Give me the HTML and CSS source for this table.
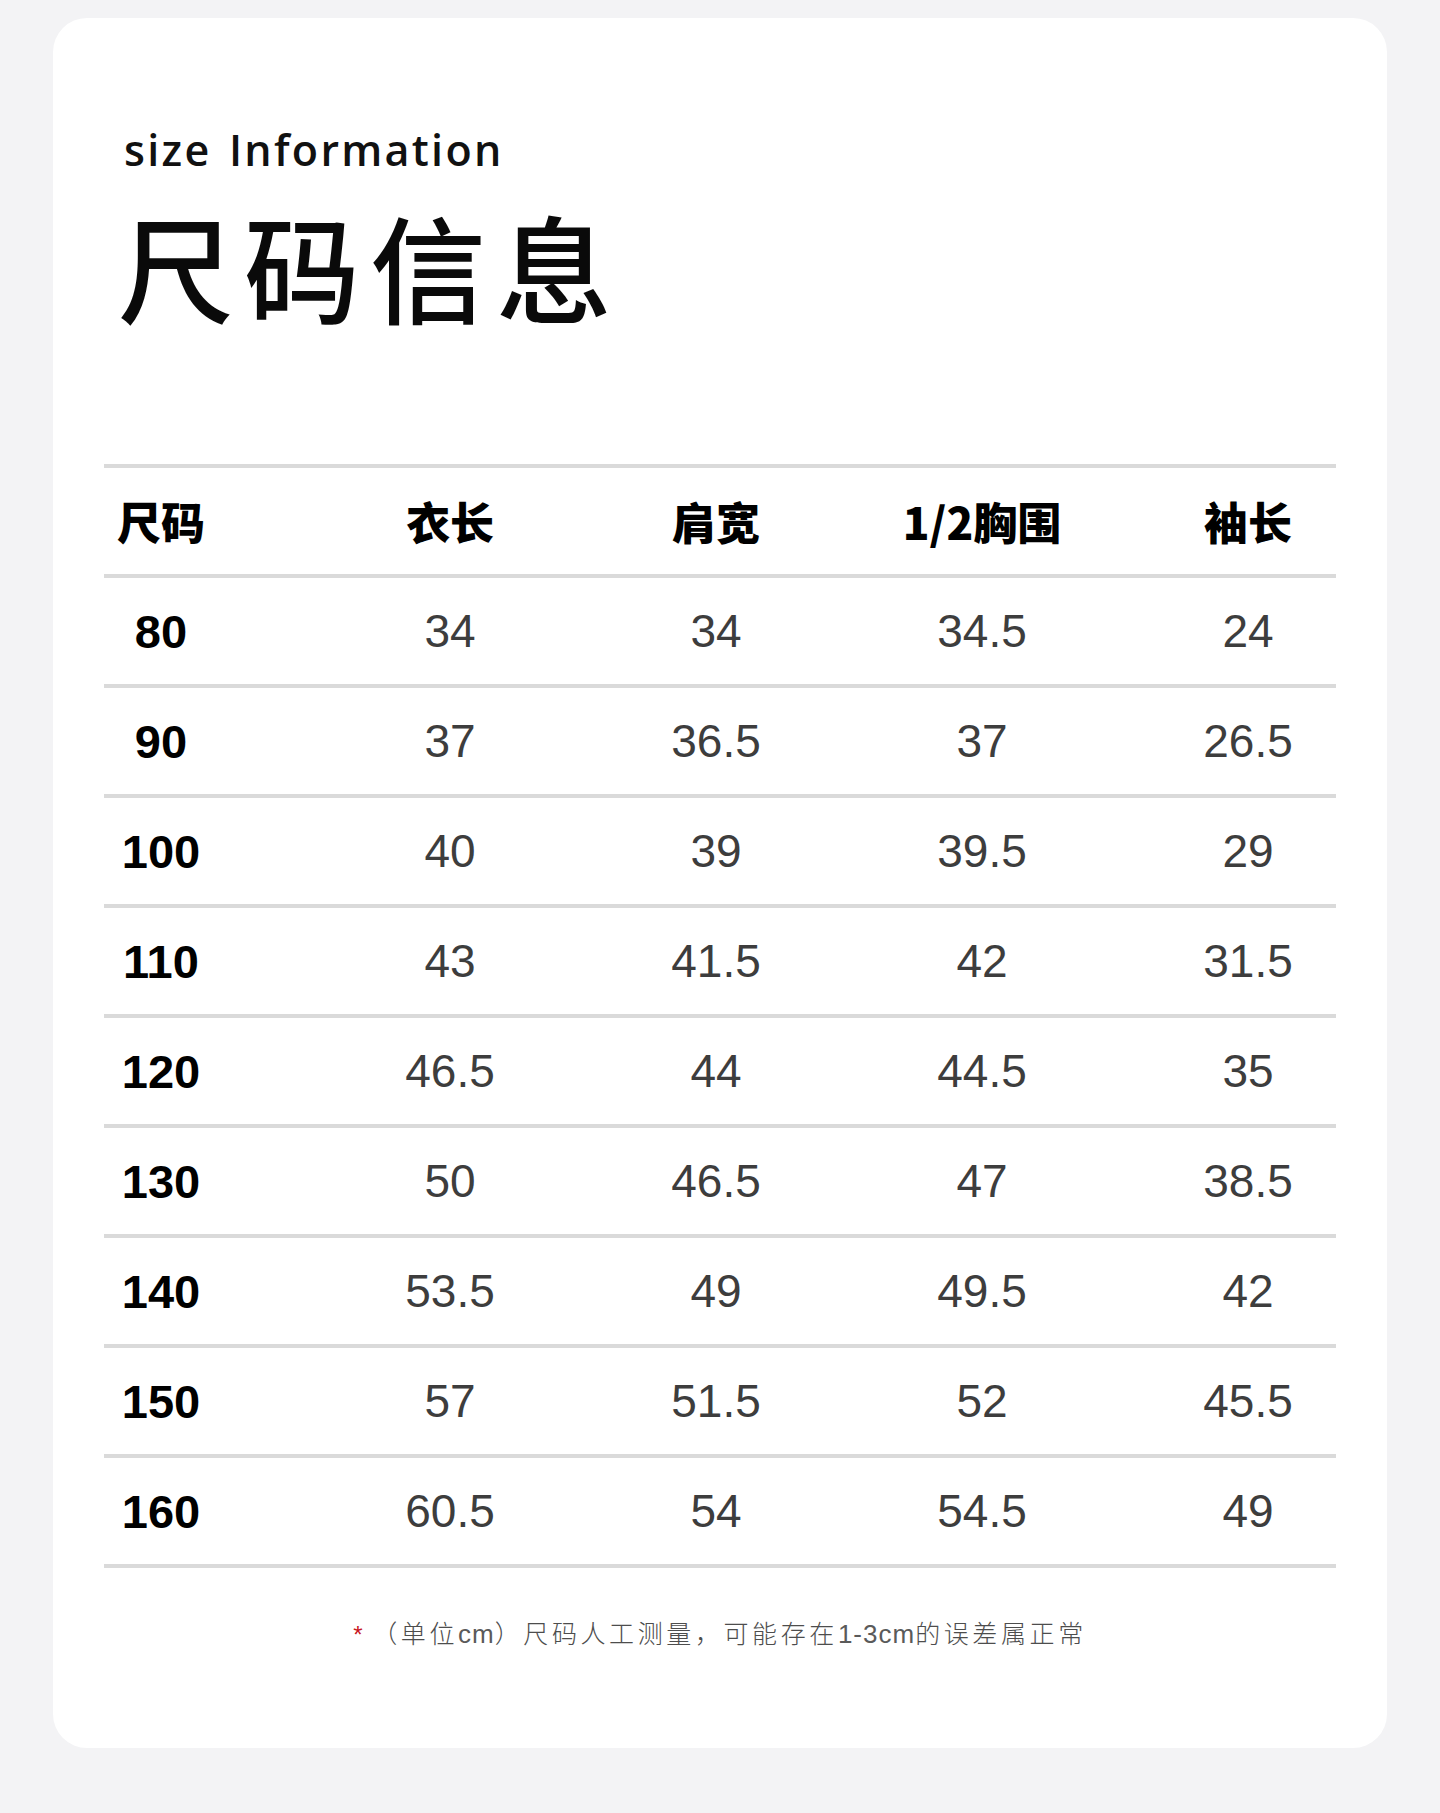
FILE: index.html
```html
<!DOCTYPE html>
<html lang="zh-CN">
<head>
<meta charset="utf-8">
<title>尺码信息</title>
<link rel="stylesheet" href="styles.css">
</head>
<body>
<div class="card">
  <div class="eyebrow">size Information</div>
  <h1 class="title">尺码信息</h1>
  <div class="table">
    <div class="row head">
      <div class="c first">尺码</div>
      <div class="c">衣长</div>
      <div class="c">肩宽</div>
      <div class="c">1/2胸围</div>
      <div class="c">袖长</div>
    </div>
    <div class="row"><div class="c first">80</div><div class="c">34</div><div class="c">34</div><div class="c">34.5</div><div class="c">24</div></div>
    <div class="row"><div class="c first">90</div><div class="c">37</div><div class="c">36.5</div><div class="c">37</div><div class="c">26.5</div></div>
    <div class="row"><div class="c first">100</div><div class="c">40</div><div class="c">39</div><div class="c">39.5</div><div class="c">29</div></div>
    <div class="row"><div class="c first">110</div><div class="c">43</div><div class="c">41.5</div><div class="c">42</div><div class="c">31.5</div></div>
    <div class="row"><div class="c first">120</div><div class="c">46.5</div><div class="c">44</div><div class="c">44.5</div><div class="c">35</div></div>
    <div class="row"><div class="c first">130</div><div class="c">50</div><div class="c">46.5</div><div class="c">47</div><div class="c">38.5</div></div>
    <div class="row"><div class="c first">140</div><div class="c">53.5</div><div class="c">49</div><div class="c">49.5</div><div class="c">42</div></div>
    <div class="row"><div class="c first">150</div><div class="c">57</div><div class="c">51.5</div><div class="c">52</div><div class="c">45.5</div></div>
    <div class="row"><div class="c first">160</div><div class="c">60.5</div><div class="c">54</div><div class="c">54.5</div><div class="c">49</div></div>
  </div>
  <p class="note"><span class="star">*</span>（单位<span class="lat">cm</span>）尺码人工测量，可能存在<span class="lat">1-3cm</span>的误差属正常</p>
</div>
</body>
</html>
```
FILE: styles.css
```css
* { box-sizing: border-box; }
html, body { margin: 0; padding: 0; }
body {
  background: #f3f3f5;
  font-family: "Noto Sans", "Noto Sans CJK SC", sans-serif;
  width: 1440px;
  height: 1813px;
}
.card {
  margin: 18px 53px 0;
  height: 1730px;
  background: #ffffff;
  border-radius: 34px;
  padding: 107px 51px 0;
}
.eyebrow {
  font-family: "Open Sans", "Noto Sans", sans-serif;
  font-weight: 600;
  font-size: 43px;
  line-height: 50px;
  letter-spacing: 2.3px;
  word-spacing: 4px;
  color: #111;
  margin-left: 20px;
}
.title {
  margin: 31px 0 0 14px;
  font-family: "Noto Sans CJK SC", sans-serif;
  font-weight: 500;
  font-size: 116px;
  line-height: 116px;
  letter-spacing: 10px;
  color: #0a0a0a;
}
.table {
  margin-top: 142px;
  border-top: 4px solid #dadada;
}
.row {
  display: grid;
  grid-template-columns: 168px repeat(4, 176px);
  column-gap: 90px;
  height: 110px;
  align-items: center;
  border-bottom: 4px solid #dadada;
  font-family: "Liberation Sans", Arial, sans-serif;
  font-size: 46px;
  color: #3d3d3d;
}
.c { text-align: center; white-space: nowrap; }
.c.first {
  width: 114px;
  justify-self: start;
  font-weight: 700;
  font-size: 47px;
  color: #000;
}
.row.head .c {
  font-family: "Noto Sans CJK SC", sans-serif;
  font-weight: 900;
  font-size: 44px;
  color: #000;
}
.note {
  margin: 47px 0 0;
  text-align: center;
  font-family: "Noto Sans CJK SC", sans-serif;
  font-weight: 300;
  font-size: 25px;
  line-height: 34px;
  letter-spacing: 3.6px;
  color: #4d4d4d;
}
.lat {
  font-family: "Liberation Sans", sans-serif;
  font-size: 26px;
  letter-spacing: 1px;
  color: #5a5a5a;
}
.star {
  color: #c8161d;
  font-family: "Liberation Sans", sans-serif;
  font-size: 24px;
  margin-right: 6px;
}
```
